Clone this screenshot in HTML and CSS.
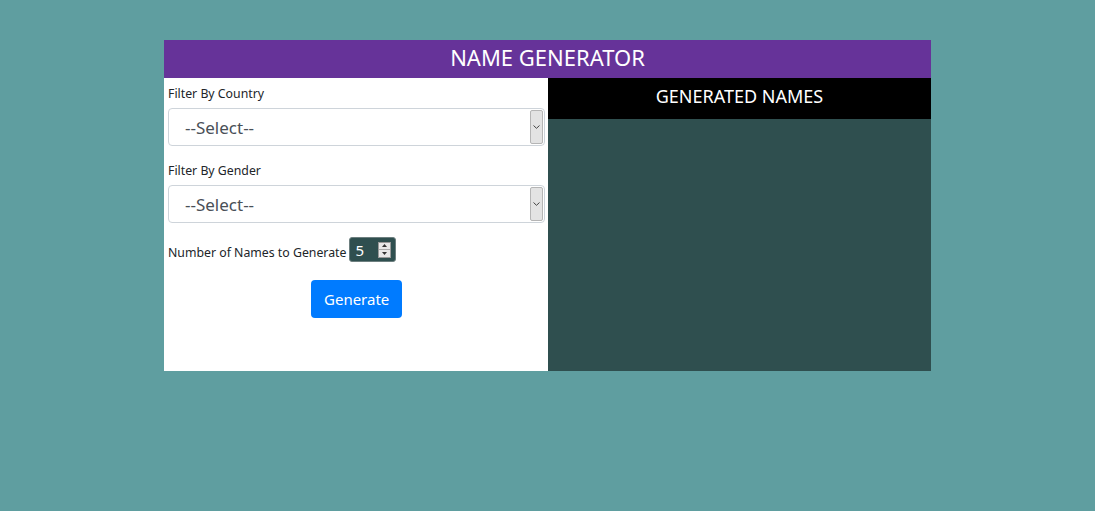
FILE: index.html
```html
<!DOCTYPE html>
<html>
<head>
<meta charset="utf-8">
<link rel="stylesheet" href="styles.css">
</head>
<body>
<div class="app">
  <header class="app-title">NAME GENERATOR</header>
  <div class="app-body">
    <section class="form-col">
      <label class="field-label">Filter By Country</label>
      <div class="select-box">
        <span class="select-text">--Select--</span>
        <span class="select-arrow"><svg width="7" height="4" viewBox="0 0 7 4"><path d="M0.5 0.5 L3.5 3.3 L6.5 0.5" fill="none" stroke="#444" stroke-width="1"/></svg></span>
      </div>
      <label class="field-label">Filter By Gender</label>
      <div class="select-box">
        <span class="select-text">--Select--</span>
        <span class="select-arrow"><svg width="7" height="4" viewBox="0 0 7 4"><path d="M0.5 0.5 L3.5 3.3 L6.5 0.5" fill="none" stroke="#444" stroke-width="1"/></svg></span>
      </div>
      <div class="count-row">
        <span class="count-label">Number of Names to Generate</span>
        <div class="num-input">
          <span class="num-value">5</span>
          <span class="spinner">
            <span class="spin-btn"><svg width="5" height="3" viewBox="0 0 5 3"><path d="M0 3 L2.5 0 L5 3 Z" fill="#333"/></svg></span>
            <span class="spin-btn"><svg width="5" height="3" viewBox="0 0 5 3"><path d="M0 0 L2.5 3 L5 0 Z" fill="#333"/></svg></span>
          </span>
        </div>
      </div>
      <div class="btn-row">
        <button class="gen-btn">Generate</button>
      </div>
    </section>
    <section class="names-col">
      <div class="names-head">GENERATED NAMES</div>
      <div class="names-list"></div>
    </section>
  </div>
</div>
</body>
</html>
```

FILE: styles.css
```css
html, body {
  margin: 0;
  padding: 0;
  background: #5f9ea0;
  font-family: "Noto Sans", "Open Sans", sans-serif;
}
.app {
  width: 767px;
  margin: 40px auto 0;
}
.app-title {
  background: #663399;
  color: #fff;
  height: 38px;
  line-height: 34px;
  text-align: center;
  font-size: 22px;
}
.app-body {
  display: flex;
  height: 293px;
}
.form-col {
  width: 384px;
  background: #fff;
  padding: 6px 3px 0 4px;
  box-sizing: border-box;
  display: flex;
  flex-direction: column;
}
.field-label {
  font-size: 12.3px;
  line-height: 20px;
  color: #212529;
  margin-bottom: 4px;
}
.select-box {
  height: 38px;
  box-sizing: border-box;
  border: 1px solid #ced4da;
  border-radius: 4px;
  display: flex;
  align-items: center;
  justify-content: space-between;
  margin-bottom: 15px;
  padding: 0 1px 0 16px;
}
.select-text {
  font-size: 17px;
  color: #495057;
  padding-top: 1px;
}
.select-arrow {
  width: 13px;
  height: 34px;
  box-sizing: border-box;
  background: #e3e3e3;
  border: 1px solid #b5b5b5;
  border-radius: 2px;
  display: flex;
  align-items: center;
  justify-content: center;
}
.count-row {
  display: flex;
  align-items: center;
  height: 25px;
  margin-top: -1px;
}
.count-label {
  font-size: 12.3px;
  color: #212529;
  margin-right: 3px;
  padding-top: 5px;
}
.num-input {
  width: 47px;
  height: 25px;
  box-sizing: border-box;
  background: #2f4f4f;
  border: 1px solid #6d7f7f;
  border-radius: 3px;
  display: flex;
  align-items: center;
  padding: 0 4px 0 5px;
  justify-content: space-between;
}
.num-value {
  color: #fff;
  font-size: 15px;
}
.spinner {
  width: 13px;
  height: 16px;
  background: #e8e8e8;
  border: 1px solid #999;
  box-sizing: border-box;
  display: flex;
  flex-direction: column;
}
.spin-btn {
  flex: 1;
  display: flex;
  align-items: center;
  justify-content: center;
}
.spin-btn + .spin-btn {
  border-top: 1px solid #aaa;
}
.btn-row {
  display: flex;
  justify-content: center;
  margin-top: 18px;
}
.gen-btn {
  background: #007bff;
  color: #fff;
  border: none;
  border-radius: 4px;
  height: 38px;
  padding: 0 13px;
  font-family: inherit;
  font-size: 15px;
  width: 91px;
}
.names-col {
  flex: 1;
  display: flex;
  flex-direction: column;
  background: #2f4f4f;
}
.names-head {
  background: #000;
  color: #fff;
  height: 41px;
  line-height: 37px;
  text-align: center;
  font-size: 18px;
}
.names-list {
  flex: 1;
}
```
